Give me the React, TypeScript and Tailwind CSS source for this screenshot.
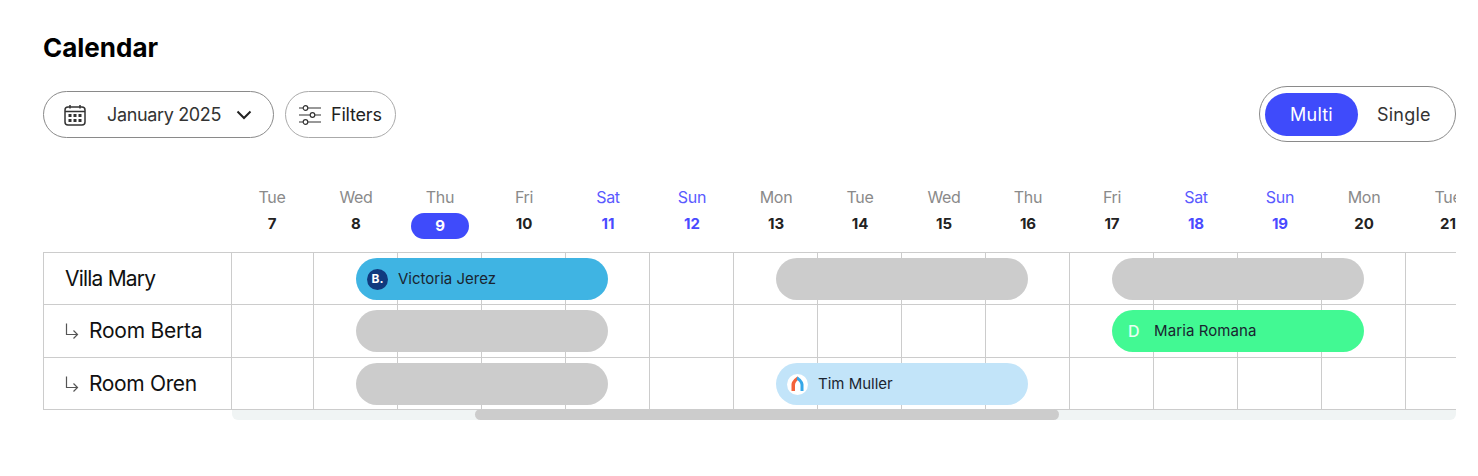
const font = "[font-family:Inter,'Noto_Sans',sans-serif]";

const days = [
  ["Tue", "7"], ["Wed", "8"], ["Thu", "9"], ["Fri", "10"], ["Sat", "11"], ["Sun", "12"], ["Mon", "13"], ["Tue", "14"],
  ["Wed", "15"], ["Thu", "16"], ["Fri", "17"], ["Sat", "18"], ["Sun", "19"], ["Mon", "20"], ["Tue", "21"],
];

function CalendarIcon() {
  return (
    <svg width="22" height="22" viewBox="0 0 22 22" fill="none" stroke="#333" strokeWidth="1.5" className="shrink-0">
      <rect x="1" y="3" width="20" height="18" rx="3" />
      <path d="M1 7.5h20M6 1v3.5M16 1v3.5" />
      <g fill="#333" stroke="none">
        <rect x="4.5" y="10" width="3" height="3" /><rect x="9.5" y="10" width="3" height="3" /><rect x="14.5" y="10" width="3" height="3" />
        <rect x="4.5" y="15" width="3" height="3" /><rect x="9.5" y="15" width="3" height="3" /><rect x="14.5" y="15" width="3" height="3" />
      </g>
    </svg>
  );
}

function FiltersIcon() {
  return (
    <svg width="22" height="20" viewBox="0 0 22 20" fill="none" stroke="#333" strokeWidth="1.2" className="shrink-0">
      <path d="M0 3h4M9 3h13M0 10h11M16 10h6M0 17h4M9 17h13" />
      <circle cx="6.5" cy="3" r="2.3" /><circle cx="13.5" cy="10" r="2.3" /><circle cx="6.5" cy="17" r="2.3" />
    </svg>
  );
}

function Arrow() {
  return (
    <svg width="14" height="16" viewBox="0 0 14 16" fill="none" stroke="#555" strokeWidth="1.2" className="shrink-0">
      <path d="M1.5 0.5V11.5H12.5M8.5 7.5L12.5 11.5L8.5 15.5" />
    </svg>
  );
}

function Bar({ left, color, children }: { left: string; color: string; children?: React.ReactNode }) {
  return (
    <div className={`absolute top-[5px] h-[42px] w-[252px] rounded-[21px] flex items-center text-[15px] text-[#1a2430] ${left} ${color}`}>
      {children}
    </div>
  );
}

function Row({ label, sub, h, last, tracking, children }: { label: string; sub?: boolean; h: string; last?: boolean; tracking: string; children?: React.ReactNode }) {
  return (
    <div className={`relative flex border-t border-[#cccccc] ${h} ${last ? "border-b" : ""}`}>
      <div className={`w-[189px] shrink-0 border-l border-r border-[#cccccc] pl-[21px] flex items-center gap-[10px] text-[21px] text-[#111] ${tracking}`}>
        {sub && <Arrow />}
        <span>{label}</span>
      </div>
      <div className="w-[82px] shrink-0 border-r border-[#cccccc]" />
      {days.slice(1).map((d) => (
        <div key={d[1]} className="w-[84px] shrink-0 border-r border-[#cccccc]" />
      ))}
      {children}
    </div>
  );
}

export default function App() {
  return (
    <div className={`w-[1478px] h-[476px] bg-white pl-[43px] pr-[22px] pt-[32px] overflow-hidden ${font}`}>
      <h1 className="text-[26px] leading-[32px] font-bold text-black tracking-normal">Calendar</h1>

      <div className="mt-[22px] flex items-start justify-between">
        <div className="mt-[5px] flex gap-[11px]">
          <button className="w-[231px] h-[47px] rounded-full border border-[#8a8a8a] flex items-center pl-[20px] text-[18px] text-[#333] tracking-[-0.35px]">
            <CalendarIcon />
            <span className="ml-[21px]">January 2025</span>
            <svg width="16" height="10" viewBox="0 0 16 10" fill="none" stroke="#222" strokeWidth="2" className="ml-[15px]">
              <path d="M1.5 1.5L8 8L14.5 1.5" />
            </svg>
          </button>
          <button className="w-[111px] h-[47px] rounded-full border border-[#aaaaaa] flex items-center pl-[13px] gap-[10px] text-[18px] text-[#222] tracking-[-0.2px]">
            <FiltersIcon />
            <span>Filters</span>
          </button>
        </div>
        <div className="w-[197px] h-[56px] rounded-full border border-[#8a8a8a] flex items-center pl-[5px] text-[18px] tracking-[0.2px]">
          <span className="w-[93px] h-[43px] rounded-full bg-[#3f4bfb] text-white flex items-center justify-center pt-[1px]">Multi</span>
          <span className="ml-[19px] text-[#333] pt-[1px]">Single</span>
        </div>
      </div>

      <div className="mt-[43px] pl-[187px] flex overflow-hidden">
        {days.map(([name, num]) => {
          const weekend = name === "Sat" || name === "Sun";
          const today = num === "9";
          return (
            <div key={num} className="w-[84px] shrink-0 flex flex-col items-center">
              <div className={`h-6 leading-6 text-[16px] tracking-[-0.3px] ${weekend ? "text-[#5a5aff]" : "text-[#8a8a8a]"}`}>{name}</div>
              {today ? (
                <div className="mt-1 w-[58px] h-[26px] rounded-[13px] bg-[#3f4bfb] text-white text-[15px] font-bold flex items-center justify-center">{num}</div>
              ) : (
                <div className={`mt-1 h-[26px] pb-[4px] text-[15px] font-bold flex items-center ${weekend ? "text-[#4a4aff]" : "text-[#222]"}`}>{num}</div>
              )}
            </div>
          );
        })}
      </div>

      <div className="mt-[13px] overflow-hidden">
        <Row label="Villa Mary" h="h-[52px]" tracking="tracking-[-0.8px]">
          <Bar left="left-[313px]" color="bg-[#3fb4e3]">
            <span className="ml-[11px] w-[21px] h-[21px] rounded-full bg-[#103a7e] text-white text-[12px] font-bold flex items-center justify-center shrink-0">B.</span>
            <span className="ml-[10px]">Victoria Jerez</span>
          </Bar>
          <Bar left="left-[733px]" color="bg-[#cccccc]" />
          <Bar left="left-[1069px]" color="bg-[#cccccc]" />
        </Row>
        <Row label="Room Berta" sub h="h-[53px]" tracking="tracking-[-0.25px]">
          <Bar left="left-[313px]" color="bg-[#cccccc]" />
          <Bar left="left-[1069px]" color="bg-[#42f993]">
            <span className="ml-[16px] w-[11px] text-[#e8fff2] text-[16px] font-medium shrink-0">D</span>
            <span className="ml-[15px] tracking-[0.1px]">Maria Romana</span>
          </Bar>
        </Row>
        <Row label="Room Oren" sub h="h-[53px]" last tracking="tracking-[-0.35px]">
          <Bar left="left-[313px]" color="bg-[#cccccc]" />
          <Bar left="left-[733px]" color="bg-[#c2e4f9]">
            <span className="ml-[11px] w-[21px] h-[21px] rounded-full bg-white flex items-center justify-center shrink-0">
              <svg width="15" height="16" viewBox="0 0 15 16" className="shrink-0">
                <path d="M1.5 15V8.5C1.5 5.5 4.5 2.5 7.5 0.5L9 3C6.5 5 5 7 5 9V15Z" fill="#f4623a" />
                <path d="M7.5 0.5C10.5 2.5 13.5 5.5 13.5 8.5V15H10.5V9C10.5 7 9 5 6.5 3.5Z" fill="#35a7e8" />
              </svg>
            </span>
            <span className="ml-[10px]">Tim Muller</span>
          </Bar>
        </Row>
      </div>

      <div className="relative ml-[189px] h-[10px] bg-[#f0f4f4] rounded-b-[6px]">
        <div className="absolute left-[243px] top-[-1px] w-[584px] h-[11px] rounded-full bg-[#cccccc]" />
      </div>
    </div>
  );
}
